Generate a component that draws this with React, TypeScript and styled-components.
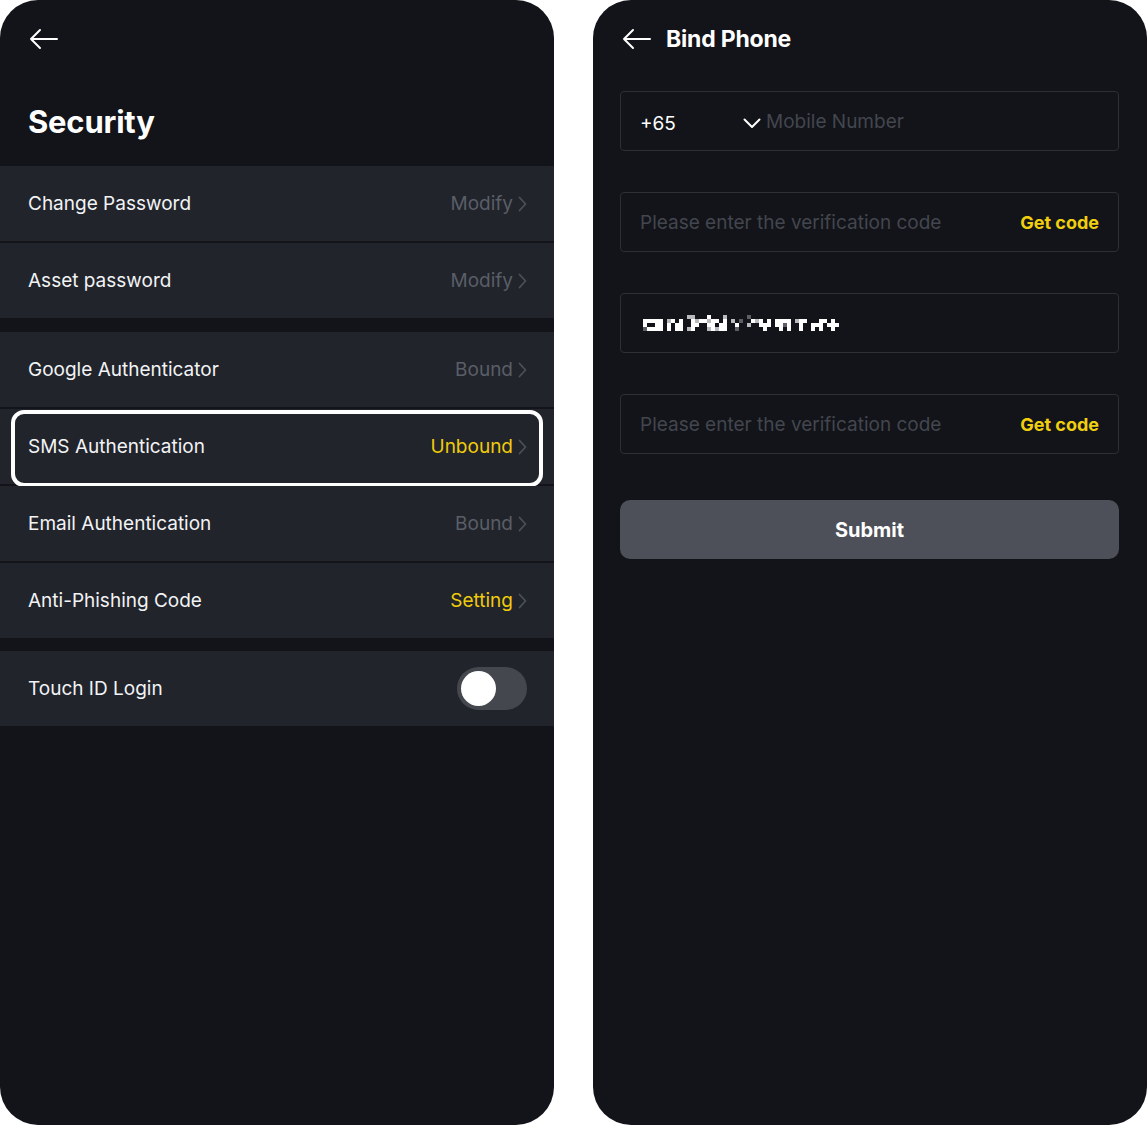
import React from 'react';
import styled, { createGlobalStyle } from 'styled-components';

const GlobalStyle = createGlobalStyle`
  body {
    margin: 0;
    background: #ffffff;
    font-family: 'Inter', 'Noto Sans', sans-serif;
  }
`;

const Screen = styled.div`
  display: flex;
  gap: 39px;
  width: 1147px;
  height: 1125px;
`;

const Phone = styled.div`
  width: 554px;
  height: 1125px;
  background: #121419;
  border-radius: 38px;
  overflow: hidden;
  display: flex;
  flex-direction: column;
  color: #ffffff;
`;

const TopBar = styled.div`
  display: flex;
  align-items: center;
  gap: 15px;
  height: 40px;
  padding: 19px 29px 0;
`;

const PageTitle = styled.h1`
  margin: 0;
  font-size: 23px;
  font-weight: 700;
  letter-spacing: -0.2px;
`;

const BigTitle = styled.h1`
  margin: 0;
  padding: 43px 28px 25px;
  font-size: 31px;
  font-weight: 700;
  line-height: 39px;
  letter-spacing: -0.2px;
`;

const Group = styled.div<{ $gap?: number }>`
  display: flex;
  flex-direction: column;
  gap: 2px;
  margin-bottom: ${p => p.$gap ?? 13}px;
`;

const Row = styled.div<{ $highlight?: boolean }>`
  position: relative;
  height: 75px;
  display: flex;
  align-items: center;
  justify-content: space-between;
  padding: 0 27px 0 28px;
  background: #21242b;

  ${p => p.$highlight && `
    &::after {
      content: '';
      position: absolute;
      top: 1px;
      bottom: -3px;
      left: 11px;
      right: 11px;
      border: 4px solid #ffffff;
      border-radius: 13px;
    }
  `}
`;

const RowLabel = styled.span`
  font-size: 19px;
  color: #f2f3f5;
`;

const RowValue = styled.span<{ $accent?: boolean }>`
  display: flex;
  align-items: center;
  gap: 5px;
  font-size: 19px;
  color: ${p => (p.$accent ? '#f0cb0b' : '#5a5e67')};
`;

const Toggle = styled.div`
  width: 70px;
  height: 43px;
  border-radius: 22px;
  background: #45474e;
  display: flex;
  align-items: center;
  padding: 0 4px;
  box-sizing: border-box;
`;

const Knob = styled.div`
  width: 35px;
  height: 35px;
  border-radius: 50%;
  background: #ffffff;
`;

const Form = styled.div`
  display: flex;
  flex-direction: column;
  gap: 41px;
  padding: 32px 28px 0 27px;
`;

const Field = styled.div`
  height: 60px;
  border: 1px solid #2c2f36;
  border-radius: 4px;
  box-sizing: border-box;
  display: flex;
  align-items: center;
  padding: 0 19px;
`;

const CountryCode = styled.span`
  display: flex;
  align-items: center;
  justify-content: space-between;
  width: 121px;
  margin-right: 5px;
  padding-top: 4px;
  font-size: 19px;
  color: #ffffff;
`;

const Placeholder = styled.span`
  flex: 1;
  font-size: 19px;
  color: #43464e;
`;

const GetCode = styled.span`
  font-size: 18px;
  font-weight: 700;
  color: #f0cf0e;
`;

const RedactedValue = styled.span`
  display: flex;
  margin-left: 3px;
`;

const SubmitButton = styled.div`
  margin: 46px 28px 0 27px;
  height: 59px;
  border-radius: 10px;
  background: #4d5058;
  display: flex;
  align-items: center;
  justify-content: center;
  font-size: 20px;
  font-weight: 700;
  color: #ffffff;
`;

const BackArrow = () => (
  <svg width="29" height="22" viewBox="0 0 29 22" fill="none">
    <path d="M28 11H2M11 2L2 11L11 20" stroke="#ffffff" strokeWidth="2" strokeLinecap="round" strokeLinejoin="round" />
  </svg>
);

const Chevron = () => (
  <svg width="9" height="16" viewBox="0 0 9 16" fill="none">
    <path d="M1.5 1.5L7.5 8L1.5 14.5" stroke="#4b4f57" strokeWidth="1.8" strokeLinecap="round" strokeLinejoin="round" />
  </svg>
);

const Caret = () => (
  <svg width="18" height="11" viewBox="0 0 18 11" fill="none">
    <path d="M1.5 1.5L9 9L16.5 1.5" stroke="#ffffff" strokeWidth="2" strokeLinecap="round" strokeLinejoin="round" />
  </svg>
);

// pixelated (redacted) value: W white, L light grey, D dark grey
const mosaic = [
  '           LL   W   L     D                        ',
  'WWWWW LW W  WLWWLWW W L D  WLW W WWWW LWW   WW W   ',
  'W  WW W WW  WW  WW WW  W  L  WWW WWDW  W  WWW WWW  ',
  'DWWWW W WW LW   LWLWW  D      W   W W  W  W W  W   ',
];

const Redacted = () => (
  <svg width="210" height="16" viewBox="0 0 210 16">
    {mosaic.flatMap((line, r) =>
      line.split('').map((c, i) =>
        c === ' ' ? null : (
          <rect
            key={`${r}-${i}`}
            x={i * 4}
            y={r * 4}
            width="4"
            height="4"
            fill={c === 'W' ? '#ffffff' : c === 'L' ? '#b8babe' : '#5c5f66'}
          />
        )
      )
    )}
  </svg>
);

type Item = { label: string; value: string; accent?: boolean; highlight?: boolean };

const groups: Item[][] = [
  [
    { label: 'Change Password', value: 'Modify' },
    { label: 'Asset password', value: 'Modify' },
  ],
  [
    { label: 'Google Authenticator', value: 'Bound' },
    { label: 'SMS Authentication', value: 'Unbound', accent: true, highlight: true },
    { label: 'Email Authentication', value: 'Bound' },
    { label: 'Anti-Phishing Code', value: 'Setting', accent: true },
  ],
];

const App: React.FC = () => (
  <>
    <GlobalStyle />
    <Screen>
      <Phone>
        <TopBar>
          <BackArrow />
        </TopBar>
        <BigTitle>Security</BigTitle>
        {groups.map((g, gi) => (
          <Group key={gi} $gap={gi === 0 ? 14 : 13}>
            {g.map(item => (
              <Row key={item.label} $highlight={item.highlight}>
                <RowLabel>{item.label}</RowLabel>
                <RowValue $accent={item.accent}>
                  {item.value}
                  <Chevron />
                </RowValue>
              </Row>
            ))}
          </Group>
        ))}
        <Group>
          <Row>
            <RowLabel>Touch ID Login</RowLabel>
            <Toggle>
              <Knob />
            </Toggle>
          </Row>
        </Group>
      </Phone>

      <Phone>
        <TopBar>
          <BackArrow />
          <PageTitle>Bind Phone</PageTitle>
        </TopBar>
        <Form>
          <Field>
            <CountryCode>
              +65
              <Caret />
            </CountryCode>
            <Placeholder>Mobile Number</Placeholder>
          </Field>
          <Field>
            <Placeholder>Please enter the verification code</Placeholder>
            <GetCode>Get code</GetCode>
          </Field>
          <Field>
            <RedactedValue>
              <Redacted />
            </RedactedValue>
          </Field>
          <Field>
            <Placeholder>Please enter the verification code</Placeholder>
            <GetCode>Get code</GetCode>
          </Field>
        </Form>
        <SubmitButton>Submit</SubmitButton>
      </Phone>
    </Screen>
  </>
);

export default App;
